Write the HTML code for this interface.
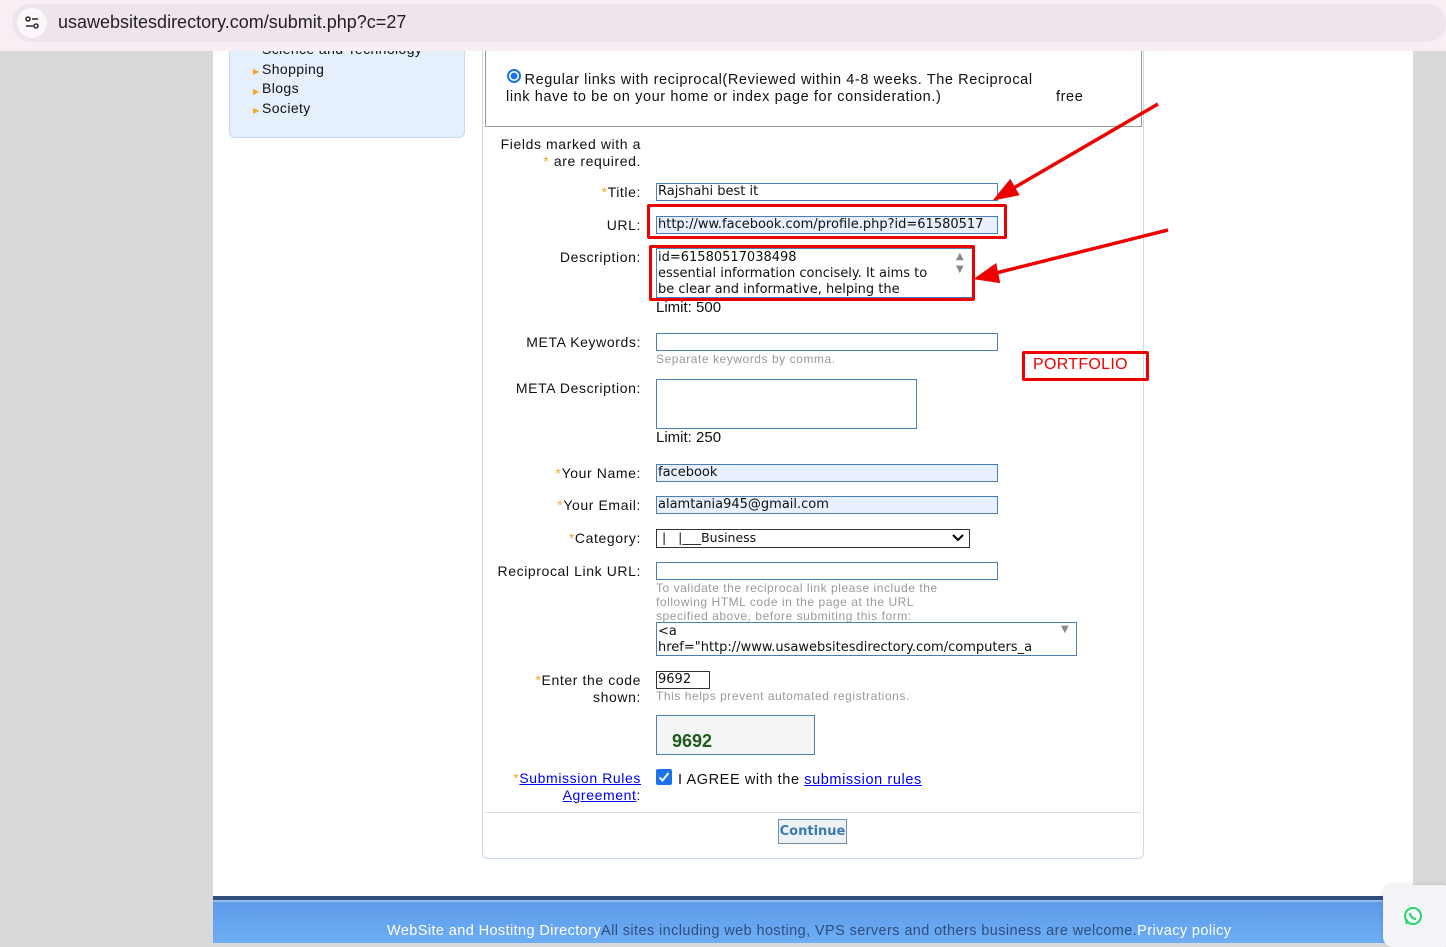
<!DOCTYPE html>
<html><head><meta charset="utf-8"><style>
*{margin:0;padding:0;box-sizing:border-box}
body{width:1446px;height:943px;overflow:hidden;background:#d9d9d9;font-family:"DejaVu Sans",Verdana,sans-serif;font-size:13px;color:#111;position:relative}
.a{position:absolute;white-space:nowrap}
.r{text-align:right}
.L{font-family:'Liberation Sans',Arial,sans-serif;letter-spacing:0.6px}
.inp{position:absolute;border:1px solid #4a7fb5;background:#fff;height:18px;font-size:13px;padding-left:1px;line-height:16px;overflow:hidden;white-space:nowrap}
.hint{color:#999;font-size:12px;font-family:"Liberation Sans",Arial,sans-serif;letter-spacing:0.55px}
.st{color:#f5a623}
a{color:#00e;text-decoration:underline}
.red{position:absolute;border:3px solid #e00;border-radius:2px}
</style></head><body>
<div class="a" style="left:213px;top:51px;width:1200px;height:850px;background:#fff"></div>
<div class="a" style="left:229px;top:51px;width:236px;height:87px;background:#e6f0fd;border:1px solid #c5daf2;border-top:none;border-radius:0 0 6px 6px"></div>
<div class="a L" style="left:262px;top:40px;font-size:14px;line-height:19.5px;letter-spacing:0.4px">Science and Technology<br>Shopping<br>Blogs<br>Society</div>
<div class="a" style="left:253px;top:62px;color:#f5a623;font-size:8px;line-height:19.5px">▶<br>▶<br>▶</div>
<div class="a" style="left:0;top:0;width:1446px;height:51px;background:#f7eff3;z-index:1"></div>
<div class="a" style="left:12px;top:4px;width:1434px;height:38px;background:#efe3ee;border-radius:19px;z-index:1"></div>
<div class="a" style="left:17px;top:8px;width:30px;height:30px;background:#fbf6fa;border-radius:50%;z-index:1"></div>
<svg class="a" style="left:24px;top:15px;z-index:2" width="16" height="16" viewBox="0 0 16 16" fill="none" stroke="#333" stroke-width="1.6"><circle cx="4" cy="4" r="2"/><line x1="8" y1="4" x2="14" y2="4"/><circle cx="12" cy="11" r="2"/><line x1="2" y1="11" x2="9" y2="11"/></svg>
<div class="a" style="left:58px;top:12px;font-family:'Liberation Sans',Arial,sans-serif;font-size:18px;color:#222;z-index:2">usawebsitesdirectory.com/submit.php?c=27</div>

<div class="a" style="left:482px;top:51px;width:662px;height:808px;border:1px solid #c8daf0;border-top:none;border-radius:0 0 6px 6px"></div>
<div class="a" style="left:485px;top:51px;width:657px;height:76px;border:1px solid #999;border-top:none"></div>
<div class="a" style="left:507px;top:69px;width:14px;height:14px;border-radius:50%;border:2px solid #1a73e8;background:radial-gradient(#1a73e8 45%,#fff 50%)"></div>
<div class="a L" style="left:506px;top:72px;font-size:14.5px;line-height:17px">&nbsp;&nbsp;&nbsp;&nbsp;Regular links with reciprocal(Reviewed within 4-8 weeks. The Reciprocal<br>link have to be on your home or index page for consideration.)</div>
<div class="a L" style="left:1056px;top:89px;font-size:14.5px">free</div>

<div class="a r L" style="right:805px;top:136px;font-size:14px;line-height:17px">Fields marked with a<br><span class="st">*</span> are required.</div>

<div class="a r L" style="right:805px;top:184px;font-size:14px"><span class="st">*</span>Title:</div>
<div class="inp" style="left:656px;top:183px;width:342px">Rajshahi best it</div>
<div class="a r L" style="right:805px;top:217px;font-size:14px">URL:</div>
<div class="inp" style="left:656px;top:216px;width:342px;background:#e8f0fe">http://ww.facebook.com/profile.php?id=61580517</div>
<div class="red" style="left:647px;top:204px;width:360px;height:35px"></div>
<div class="a r L" style="right:805px;top:249px;font-size:14px">Description:</div>
<div class="a" style="left:656px;top:248px;width:317px;height:50px;border:1px solid #4a7fb5;font-size:13px;line-height:16px;padding-left:1px;padding-top:1px;overflow:hidden">id=61580517038498<br>essential information concisely. It aims to<br>be clear and informative, helping the</div>
<div class="a" style="left:956px;top:250px;color:#888;font-size:10px;line-height:13px">▲<br>▼</div>
<div class="red" style="left:649px;top:245px;width:326px;height:56px"></div>
<div class="a" style="left:656px;top:299px;font-size:15px;font-family:'Liberation Sans',Arial,sans-serif">Limit: 500</div>

<div class="a r L" style="right:805px;top:334px;font-size:14px">META Keywords:</div>
<div class="inp" style="left:656px;top:333px;width:342px"></div>
<div class="a hint" style="left:656px;top:352px">Separate keywords by comma.</div>
<div class="red" style="left:1022px;top:351px;width:127px;height:30px"></div>
<div class="a" style="left:1033px;top:356px;color:#e00;font-size:16px;font-family:'Liberation Sans',Arial,sans-serif;letter-spacing:0.3px">PORTFOLIO</div>

<div class="a r L" style="right:805px;top:380px;font-size:14px">META Description:</div>
<div class="a" style="left:656px;top:379px;width:261px;height:50px;border:1px solid #4a7fb5"></div>
<div class="a" style="left:656px;top:429px;font-size:15px;font-family:'Liberation Sans',Arial,sans-serif">Limit: 250</div>

<div class="a r L" style="right:805px;top:465px;font-size:14px"><span class="st">*</span>Your Name:</div>
<div class="inp" style="left:656px;top:464px;width:342px;background:#e8f0fe">facebook</div>
<div class="a r L" style="right:805px;top:497px;font-size:14px"><span class="st">*</span>Your Email:</div>
<div class="inp" style="left:656px;top:496px;width:342px;background:#e8f0fe">alamtania945@gmail.com</div>
<div class="a r L" style="right:805px;top:530px;font-size:14px"><span class="st">*</span>Category:</div>
<div class="inp" style="left:656px;top:529px;width:314px;height:19px;border-color:#333;font-size:12.5px">&nbsp;|&nbsp;&nbsp;&nbsp;|___Business</div>
<svg class="a" style="left:952px;top:534px" width="12" height="9" viewBox="0 0 12 9"><path d="M1 1L6 6L11 1" fill="none" stroke="#000" stroke-width="2"/></svg>

<div class="a r L" style="right:805px;top:563px;font-size:14px">Reciprocal Link URL:</div>
<div class="inp" style="left:656px;top:562px;width:342px"></div>
<div class="a hint" style="left:656px;top:581px;line-height:14px">To validate the reciprocal link please include the<br>following HTML code in the page at the URL<br>specified above, before submiting this form:</div>
<div class="a" style="left:656px;top:622px;width:421px;height:34px;border:1px solid #4a7fb5;font-size:13px;line-height:16px;padding-left:1px;padding-top:1px;overflow:hidden">&lt;a<br>href="http://www.usawebsitesdirectory.com/computers_a</div>
<div class="a" style="left:1061px;top:624px;color:#888;font-size:10px">▼</div>

<div class="a r L" style="right:805px;top:672px;font-size:14px;line-height:17px"><span class="st">*</span>Enter the code<br>shown:</div>
<div class="inp" style="left:656px;top:671px;width:54px;border-color:#333">9692</div>
<div class="a hint" style="left:656px;top:689px">This helps prevent automated registrations.</div>
<div class="a" style="left:656px;top:715px;width:159px;height:40px;border:1px solid #4a7fb5;background:#f3f6f5"></div>
<div class="a" style="left:672px;top:731px;color:#1f5a1f;font-weight:bold;font-size:18px;font-family:'Liberation Sans',Arial,sans-serif">9692</div>

<div class="a r L" style="right:805px;top:770px;font-size:14px;line-height:17px"><span class="st">*</span><a>Submission Rules</a><br><a>Agreement</a>:</div>
<div class="a" style="left:656px;top:769px;width:16px;height:16px;background:#1a73e8;border-radius:2px"></div>
<svg class="a" style="left:657px;top:770px" width="14" height="14" viewBox="0 0 14 14"><path d="M2.5 7.5L5.5 10.5L11.5 3" fill="none" stroke="#fff" stroke-width="2"/></svg>
<div class="a L" style="left:678px;top:772px;font-size:14.5px">I AGREE with the <a>submission rules</a></div>

<div class="a" style="left:485px;top:812px;width:656px;height:1px;background:#ddd"></div>
<div class="a" style="left:778px;top:819px;width:69px;height:25px;border:1px solid #6e8fa8;background:#eef2f5;color:#3a7ab0;font-weight:bold;font-size:13px;text-align:center;line-height:23px">Continue</div>

<div class="a" style="left:213px;top:896px;width:1200px;height:4px;background:#2f4f7a"></div>
<div class="a" style="left:213px;top:900px;width:1200px;height:43px;background:linear-gradient(#a9c6ee 0,#5d9ae8 3px,#6eaef5 43px)"></div>
<div class="a" style="left:387px;top:923px;font-family:'Liberation Sans',Arial,sans-serif;font-size:14.5px;letter-spacing:0.4px;color:#fff">WebSite and Hostitng Directory<span style="color:#2e4e7e">All sites including web hosting, VPS servers and others business are welcome.</span>Privacy policy</div>
<div class="a" style="left:1383px;top:885px;width:70px;height:62px;background:#f3f5f9;border-radius:10px;box-shadow:0 0 4px rgba(0,0,0,.15)"></div>
<svg class="a" style="left:1403px;top:906px" width="20" height="20" viewBox="0 0 20 20"><circle cx="10" cy="10" r="8" fill="none" stroke="#25d366" stroke-width="2"/><path d="M3 18L4.5 13.5" stroke="#25d366" stroke-width="2"/><path d="M7 7c0 3 3 6 6 6" stroke="#25d366" stroke-width="2" fill="none"/></svg>

<svg class="a" style="left:0;top:0" width="1446" height="943"><g stroke="#e00" stroke-width="3.5" fill="#e00"><line x1="1158" y1="104" x2="1005" y2="193"/><polygon points="997,198 1010,182 1017,194" /><line x1="1168" y1="230" x2="992" y2="274"/><polygon points="978,278 995,266 998,281"/></g></svg>
</body></html>
